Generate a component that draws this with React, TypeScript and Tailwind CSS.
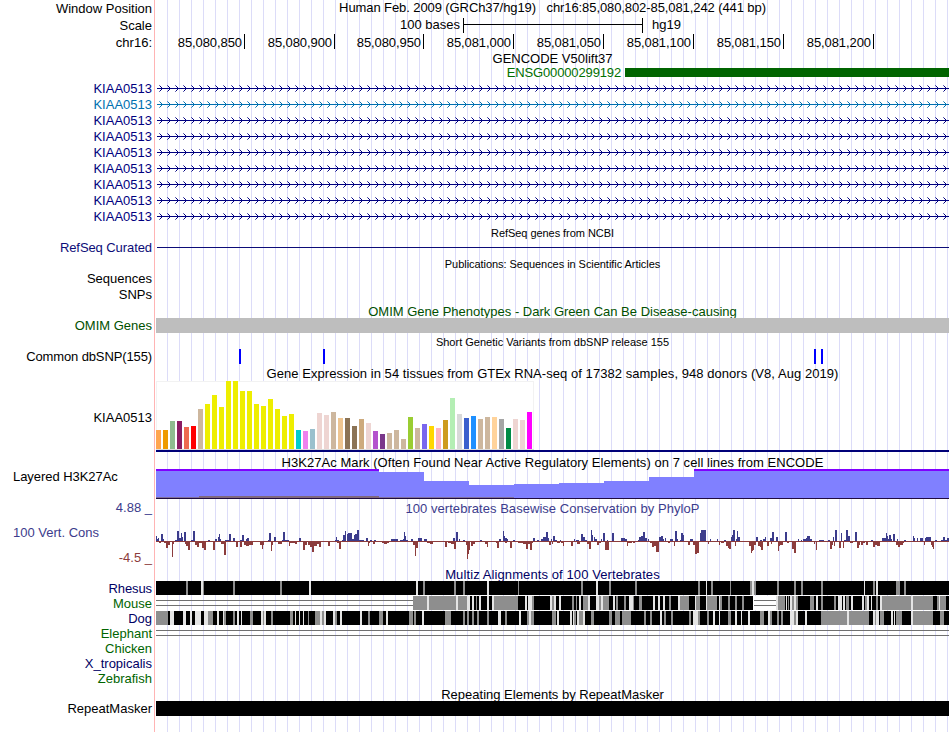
import type { ReactNode } from 'react';

const TRACK_WIDTH = 793;

const ticks = [
  { label: '85,080,850', x: 88 },
  { label: '85,080,900', x: 178 },
  { label: '85,080,950', x: 267 },
  { label: '85,081,000', x: 357 },
  { label: '85,081,050', x: 447 },
  { label: '85,081,100', x: 537 },
  { label: '85,081,150', x: 627 },
  { label: '85,081,200', x: 717 },
];

const transcripts = ['#000080', '#0070b0', '#000080', '#000080', '#000080', '#000080', '#000080', '#000080', '#000080'];

const snps = [83, 167, 658, 665];

// [height, color] per tissue
const tissues: [number, string][] = [
  [19, '#ffa54f'], [19, '#ee9a00'], [28, '#8fbc8f'], [28, '#8b1c62'], [22, '#ee6a50'], [23, '#ff0000'],
  [40, '#cdb79e'], [45, '#eeee00'], [54, '#eeee00'], [42, '#eeee00'], [68, '#eeee00'], [68, '#eeee00'],
  [58, '#eeee00'], [58, '#eeee00'], [45, '#eeee00'], [43, '#eeee00'], [50, '#eeee00'], [40, '#eeee00'],
  [33, '#eeee00'], [35, '#eeee00'], [19, '#00cdcd'], [18, '#ee82ee'], [20, '#9ac0cd'], [36, '#eed5d2'],
  [34, '#eed5d2'], [37, '#cdb79e'], [31, '#eec591'], [31, '#8b7355'], [23, '#8b7355'], [30, '#cdaa7d'],
  [26, '#eed5d2'], [18, '#b452cd'], [15, '#7a378b'], [16, '#cdb79e'], [19, '#cdb79e'], [10, '#cdb79e'],
  [32, '#9acd32'], [21, '#cdb79e'], [25, '#7a67ee'], [23, '#ffd700'], [21, '#ffb6c1'], [29, '#cd9b1d'],
  [51, '#b4eeb4'], [35, '#d9d9d9'], [31, '#3a5fcd'], [33, '#1e90ff'], [30, '#cdb79e'], [32, '#cdb79e'],
  [32, '#ffd39b'], [30, '#a6a6a6'], [21, '#008b45'], [30, '#eed5d2'], [29, '#eed5d2'], [37, '#ff00ff'],
];

// [x, width, top]
const acetylation: [number, number, number][] = [
  [0, 223, 0], [223, 45, 3], [268, 45, 12], [313, 45, 16], [358, 45, 15],
  [403, 45, 14], [448, 45, 12], [493, 45, 8], [538, 255, 0],
];

// conservation scores as "x,width,score", x counted from the chunk's start
const conservation = [
  {
    start: -6,
    scores:
      '6,1,5 7,1,2 8,1,3 11,2,7 13,1,2 25,2,1 27,2,10 29,2,3 31,1,8 32,1,4 34,2,9 41,2,1 43,2,10 58,2,1 65,2,2 68,1,4 69,1,7 70,1,2 75,4,1 79,2,7 83,2,3 90,2,1 92,2,6 96,1,2 97,2,3 118,1,1 119,2,8 124,2,4 132,1,1 133,2,9 135,4,1 149,2,3 185,1,1 186,1,4 187,2,1 192,1,1 193,2,6 195,1,10 197,1,7 198,4,8 202,2,2 204,1,6 205,2,7 207,2,11 209,5,1 216,2,3 220,2,1 224,2,1 241,7,2 250,3,1 253,1,2 254,1,9 255,1,5 256,2,1 261,2,2 ' +
      '9,2,-2 14,2,-2 16,2,-7 18,2,-4 22,1,-16 23,1,-3 35,1,-3 36,2,-5 38,2,-9 45,2,-4 47,2,-6 49,3,-2 52,2,-7 54,2,-9 61,2,-1 63,2,-9 71,3,-3 74,2,-14 86,2,-6 90,2,-6 94,2,-4 96,3,-5 99,4,-4 106,4,-1 110,2,-4 112,1,-8 113,1,-4 121,1,-10 122,1,-4 128,4,-3 139,1,-5 140,5,-2 145,2,-3 153,2,-9 155,2,-4 158,2,-4 160,2,-6 162,2,-11 164,3,-5 167,2,-3 169,2,-6 178,2,-5 187,2,-2 189,2,-8 218,1,-5 219,1,-2 223,2,-3 232,2,-2 234,3,-3 237,2,-2 263,2,-4',
  },
  {
    start: 259,
    scores:
      '3,4,3 9,3,2 38,2,3 41,2,9 44,1,2 48,2,1 65,2,1 84,2,2 88,1,10 89,1,5 90,2,3 92,1,2 98,2,1 118,2,3 122,2,1 126,2,2 128,3,4 131,2,9 133,1,3 136,1,2 138,2,5 140,2,1 145,1,1 159,1,2 161,3,1 166,2,7 168,2,4 170,2,1 176,1,11 177,1,6 179,1,4 180,2,2 186,1,2 188,2,8 192,1,1 197,2,8 206,4,3 210,2,2 223,1,1 224,2,4 226,2,5 228,2,9 230,2,3 233,1,2 244,2,4 246,2,5 248,1,2 250,1,3 255,3,2 260,2,10 262,1,2 266,2,8 268,1,6 ' +
      '0,1,-15 1,2,-7 12,3,-2 15,3,-3 28,2,-1 30,2,-6 33,3,-2 36,3,-3 39,2,-8 51,1,-4 52,1,-18 53,1,-13 54,1,-9 56,2,-5 58,2,-3 70,2,-3 72,1,-6 81,1,-2 82,2,-7 90,2,-2 95,2,-7 103,5,-2 108,4,-3 111,2,-8 113,2,-3 115,2,-9 117,1,-2 134,2,-4 137,1,-3 142,3,-2 146,2,-2 148,1,-5 156,2,-5 162,3,-3 172,2,-3 174,2,-8 182,2,-4 184,2,-2 190,4,-9 212,1,-5 213,4,-2 218,2,-2 235,2,-2 237,2,-6 239,2,-5 241,3,-11 253,2,-2 259,1,-5',
  },
  {
    start: 524,
    scores:
      '0,1,1 1,1,8 2,1,4 10,3,2 20,1,8 21,5,11 30,1,2 37,1,2 44,2,1 51,1,4 52,1,6 53,2,11 56,1,2 57,1,10 58,2,4 76,2,4 80,2,1 83,2,2 85,1,4 90,2,3 92,2,9 96,2,4 105,2,9 118,1,2 121,1,1 123,3,2 126,1,3 127,3,5 130,2,2 139,5,1 148,2,1 153,1,4 155,2,11 161,1,8 164,2,1 166,2,11 168,2,5 175,2,9 191,2,1 202,4,3 206,1,8 207,1,5 208,1,2 209,2,6 211,1,2 213,2,7 217,1,2 224,2,1 233,1,5 234,1,3 237,1,3 240,3,3 245,1,3 246,5,4 255,2,1 261,2,1 263,2,4 265,2,1 267,2,3 ' +
      '8,2,-4 13,2,-4 15,2,-13 17,2,-12 28,1,-3 39,1,-4 41,3,-2 46,2,-5 48,1,-7 49,2,-8 55,1,-5 69,2,-5 71,1,-12 72,1,-10 73,1,-9 74,2,-4 78,2,-5 80,1,-6 81,2,-9 87,2,-5 91,1,-3 98,1,-10 99,1,-5 100,3,-4 107,2,-2 112,2,-8 114,2,-12 134,1,-3 136,1,-9 150,2,-8 152,1,-4 154,1,-5 159,2,-7 163,1,-7 170,3,-2 177,2,-7 179,1,-4 181,2,-4 183,2,-2 186,2,-4 193,2,-6 195,2,-4 197,3,-5 216,2,-4 218,2,-6 220,3,-4 223,1,-2 244,1,-4 251,1,-4 252,1,-6 253,1,-8',
  },
];

// stretches that are not fully conserved, as "x,width"
const alignments = {
  rhesus: {
    gray: '30,2 47,1 77,2 124,2 267,2 298,2 307,2 362,1 425,2 453,2 479,2 542,2 555,2 574,1 594,2 598,2 621,2 638,2 645,2 665,2 717,2 740,4 748,2',
    light: '45,2 153,2 260,2 331,2 440,2 550,1 596,2 708,1 720,2',
  },
  mouse: {
    gray: '257,14 273,27 302,9 320,1 338,24 376,2 396,2 416,2 420,1 427,5 443,2 447,6 460,2 468,2 477,1 483,3 513,2 524,9 540,4 551,10 564,2 572,2 579,2 586,2 622,7 632,1 636,2 640,2 654,4 665,2 678,2 690,3 709,2 720,2 726,29 757,20 781,2 784,6',
    light: '271,2 300,2 311,3 316,2 323,2 331,2 336,2 369,2 372,4 394,2 398,2 403,2 423,2 432,2 440,3 445,2 457,2 473,4 497,2 502,2 507,2 522,2 539,1 550,1 563,1 620,2 630,1 634,2 638,2 660,2 682,4 687,2 695,2 706,2 711,2 715,1 724,2 755,2 783,1',
  },
  dog: {
    gray: '0,12 52,5 68,2 77,2 94,3 107,1 115,2 134,3 152,1 159,5 166,2 179,2 212,2 223,4 253,4 258,2 289,6 307,2 311,2 316,2 321,2 331,2 349,2 371,2 375,3 396,4 418,2 423,4 435,3 453,3 459,5 466,9 488,2 494,2 508,2 515,2 533,2 542,2 551,2 572,3 604,4 614,2 621,2 625,2 638,2 665,26 693,20 719,1 724,4 740,6 757,20 784,4',
    light: '14,4 27,3 34,2 39,6 48,4 61,2 67,1 81,2 85,1 105,2 108,2 139,1 143,1 147,1 164,2 168,2 177,2 184,2 204,2 230,2 266,2 342,3 363,2 373,2 401,2 414,2 417,1 421,2 427,2 504,2 537,2 539,3 557,2 563,1 579,2 585,1 592,2 612,2 634,4 640,2 649,2 691,2 717,2 720,3 735,2 738,1 755,2',
  },
};

const parse = (text: string) => text.split(' ').map((item) => item.split(',').map(Number));

function Row({ label, className, children }: { label?: ReactNode; className: string; children?: ReactNode }) {
  return (
    <div className={`flex shrink-0 ${className}`}>
      <div className="mr-1 flex w-[152px] shrink-0 items-center justify-end whitespace-pre">{label}</div>
      <div className="w-[793px] shrink-0">{children}</div>
    </div>
  );
}

function Title({ className, children }: { className: string; children: ReactNode }) {
  return (
    <Row className={className}>
      <div className="flex h-full items-center justify-center whitespace-pre">{children}</div>
    </Row>
  );
}

function Track({ height, children }: { height: number; children: ReactNode }) {
  return (
    <svg className="block overflow-visible" width={TRACK_WIDTH} height={height} shapeRendering="crispEdges">
      {children}
    </svg>
  );
}

function DoubleLine({ x = 0, width = TRACK_WIDTH }: { x?: number; width?: number }) {
  return (
    <g fill="#707070">
      <rect x={x} y={4} width={width} height={1} />
      <rect x={x} y={9} width={width} height={1} />
    </g>
  );
}

function Alignment({ gray, light, from = 0 }: { gray: string; light: string; from?: number }) {
  return (
    <>
      <rect x={from} width={TRACK_WIDTH - from} height={14} />
      {parse(gray).map(([x, w]) => (
        <rect key={x} x={x} width={w} height={14} fill="#8e8e8e" />
      ))}
      {parse(light).map(([x, w]) => (
        <rect key={x} x={x} width={w} height={14} fill="#e4e4e4" />
      ))}
    </>
  );
}

function Transcript({ color }: { color: string }) {
  const arrows = Array.from({ length: 99 }, (_, i) => 3 + i * 8);
  return (
    <Track height={16}>
      <rect x={1} y={8} width={792} height={1} fill={color} />
      {arrows.map((x) => (
        <g key={x} fill={color}>
          <path d={`M${x + 1} 6h1v1h-1z M${x + 2} 7h1v1h-1z M${x + 2} 9h1v1h-1z M${x + 1} 10h1v1h-1z`} />
          <path opacity={0.6} d={`M${x} 5h1v1h-1z M${x} 11h1v1h-1z`} />
        </g>
      ))}
    </Track>
  );
}

function Conservation() {
  return (
    <Track height={67}>
      <rect y={41} width={TRACK_WIDTH} height={1} fill="#8c3c3c" />
      {conservation.map(({ start, scores }) =>
        parse(scores).map(([x, w, score]) => (
          <rect
            key={`${start}-${x}-${score}`}
            x={start + x}
            y={score > 0 ? 41 - score : 41}
            width={w}
            height={Math.abs(score)}
            fill={score > 0 ? '#3c3c8c' : '#8c3c3c'}
          />
        )),
      )}
    </Track>
  );
}

export default function App() {
  return (
    <div className="relative h-[732px] w-[950px] overflow-hidden bg-white font-['Liberation_Sans',Arial,sans-serif] text-[13px] leading-none text-black">
      <svg className="absolute inset-0" width={950} height={732} shapeRendering="crispEdges">
        <rect x={154} width={1} height={732} fill="#ffb4b4" />
        {Array.from({ length: 66 }, (_, i) => (
          <rect key={i} x={167 + i * 12} width={1} height={732} fill="#dcdcf8" />
        ))}
      </svg>

      <div className="relative flex flex-col">
        <Row className="h-[17px]" label="Window Position">
          <div className="flex h-full items-center justify-center whitespace-pre pb-[2px] tracking-[-0.09px]">
            {'Human Feb. 2009 (GRCh37/hg19)   chr16:85,080,802-85,081,242 (441 bp)'}
          </div>
        </Row>
        <Row className="h-[17px]" label="Scale">
          <div className="flex h-full items-center">
            <span className="w-[304px] pb-[2px] text-right">100 bases</span>
            <svg className="ml-[3px] mr-[9px]" width={180} height={17} shapeRendering="crispEdges">
              <path d="M0 1h1v15h-1z M1 7h179v1h-179z M179 1h1v15h-1z" />
            </svg>
            <span className="pb-[2px]">hg19</span>
          </div>
        </Row>
        <Row className="h-[17px]" label="chr16:">
          <Track height={17}>
            {ticks.map((tick) => (
              <g key={tick.label}>
                <text className="tracking-[-0.08px]" x={tick.x - 2} y={13} textAnchor="end">{tick.label}</text>
                <rect x={tick.x} width={1} height={15} />
              </g>
            ))}
          </Track>
        </Row>

        <Title className="h-[15px]">GENCODE V50lift37</Title>
        <Row className="h-[14px]">
          <div className="flex h-full items-center text-[#007000]">
            <span className="w-[465px] pb-[2px] text-right tracking-[-0.14px]">ENSG00000299192</span>
            <span className="mb-px ml-1 h-[9px] flex-1 bg-[#006400]" />
          </div>
        </Row>
        {transcripts.map((color, i) => (
          <Row key={i} className="h-4" label={<span style={{ color }}>KIAA0513</span>}>
            <Transcript color={color} />
          </Row>
        ))}

        <Title className="h-[17px] pt-[2px] text-[11px] tracking-[-0.05px]">RefSeq genes from NCBI</Title>
        <Row className="h-[15px] text-[#0c0c78]" label={<span className="pb-[2px] tracking-[-0.08px]">RefSeq Curated</span>}>
          <Track height={15}>
            <rect x={1} y={6} width={792} height={1} fill="#0c0c78" />
          </Track>
        </Row>

        <Title className="h-4 text-[11px] tracking-[-0.05px]">Publications: Sequences in Scientific Articles</Title>
        <Row className="h-[15px]" label={<span className="pb-[2px]">Sequences</span>} />
        <Row className="h-4" label={<span className="pb-[2px]">SNPs</span>} />

        <Title className="h-[15px] pt-[2px] text-[#005000]">OMIM Gene Phenotypes - Dark Green Can Be Disease-causing</Title>
        <Row className="h-[15px] text-[#005000]" label="OMIM Genes">
          <div className="h-full bg-[#bebebe]" />
        </Row>

        <Title className="h-4 pt-[2px] text-[11px]">Short Genetic Variants from dbSNP release 155</Title>
        <Row className="h-[15px]" label={<span className="tracking-[-0.12px]">Common dbSNP(155)</span>}>
          <Track height={15}>
            {snps.map((x) => (
              <rect key={x} x={x} width={2} height={15} fill="#0000ff" />
            ))}
          </Track>
        </Row>

        <Title className="h-[17px] pt-[2px] tracking-[0.05px]">
          Gene Expression in 54 tissues from GTEx RNA-seq of 17382 samples, 948 donors (V8, Aug 2019)
        </Title>
        <Row className="h-[73px]" label="KIAA0513">
          <Track height={73}>
            <rect width={378} height={69} fill="#f2f2f2" />
            <rect x={1} y={1} width={376} height={67} fill="#fff" />
            <rect y={68} width={378} height={1} fill="#dcdcdc" />
            {tissues.map(([height, fill], i) => (
              <rect key={i} x={i * 7} y={68 - height} width={5} height={height} fill={fill} />
            ))}
            <rect y={69} width={TRACK_WIDTH} height={2} fill="#000078" />
          </Track>
        </Row>

        <Title className="h-[15px] pt-[2px] tracking-[0.05px]">
          H3K27Ac Mark (Often Found Near Active Regulatory Elements) on 7 cell lines from ENCODE
        </Title>
        <Row className="h-[31px]" label={<span className="w-[139px] pb-4 tracking-[-0.05px]">Layered H3K27Ac</span>}>
          <Track height={31}>
            {acetylation.map(([x, w, top]) => (
              <g key={x}>
                <rect x={x} y={top} width={w} height={29 - top} fill="#8080ff" />
                {top === 0 && <rect x={x} width={w} height={2} fill="#8000ff" />}
              </g>
            ))}
            <rect y={28} width={358} height={1} fill="#80709c" />
            <rect x={43} y={27} width={180} height={2} fill="#80687c" />
            <rect y={29} width={TRACK_WIDTH} height={1} fill="#200c40" />
          </Track>
        </Row>

        <Row
          className="h-[67px]"
          label={
            <div className="flex h-full w-full flex-col items-end justify-between pb-[3px] pt-px text-[#3c3c8c]">
              <span>4.88 _</span>
              <span className="w-[139px]">100 Vert. Cons</span>
              <span className="text-[#8c3c3c]">-4.5 _</span>
            </div>
          }
        >
          <div className="flex h-[17px] items-center justify-center tracking-[0.04px] text-[#3c3c8c]">
            100 vertebrates Basewise Conservation by PhyloP
          </div>
          <div className="-mt-[17px]">
            <Conservation />
          </div>
        </Row>

        <Title className="h-[14px] tracking-[0.1px] text-[#000064]">Multiz Alignments of 100 Vertebrates</Title>
        <Row className="h-[15px] text-[#000064]" label={<span className="tracking-[-0.1px]">Rhesus</span>}>
          <Track height={15}>
            <Alignment {...alignments.rhesus} />
          </Track>
        </Row>
        <Row className="h-[15px] text-[#006400]" label="Mouse">
          <Track height={15}>
            <DoubleLine width={257} />
            <Alignment {...alignments.mouse} from={257} />
            <rect x={597} width={23} height={14} fill="#fff" />
            <DoubleLine x={598} width={22} />
          </Track>
        </Row>
        <Row className="h-[15px] text-[#000064]" label="Dog">
          <Track height={15}>
            <Alignment {...alignments.dog} />
          </Track>
        </Row>
        <Row className="h-[15px] text-[#006400]" label="Elephant">
          <Track height={15}>
            <DoubleLine />
          </Track>
        </Row>
        <Row className="h-[15px] text-[#006400]" label="Chicken" />
        <Row className="h-[15px] text-[#000064]" label="X_tropicalis" />
        <Row className="h-[15px] text-[#006400]" label="Zebrafish" />

        <Title className="h-[15px] pt-[2px]">Repeating Elements by RepeatMasker</Title>
        <Row className="h-[15px]" label="RepeatMasker">
          <div className="h-full bg-black" />
        </Row>
      </div>
    </div>
  );
}
